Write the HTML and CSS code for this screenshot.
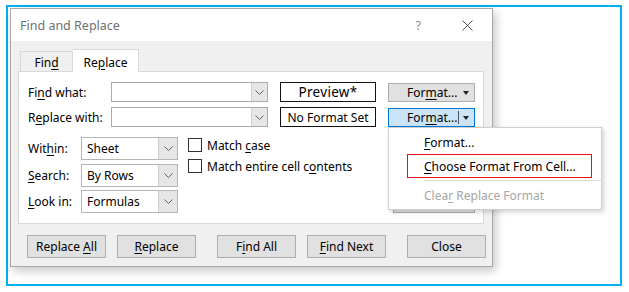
FILE: index.html
```html
<!DOCTYPE html>
<html>
<head>
<meta charset="utf-8">
<link rel="stylesheet" href="styles.css">
</head>
<body>
<div class="frame">
  <div class="dialog">
    <div class="titlebar">
      <span class="title">Find and Replace</span>
      <span class="help">?</span>
      <svg class="closex" width="11" height="11" viewBox="0 0 11 11"><path d="M0.5 0.5 L10.5 10.5 M10.5 0.5 L0.5 10.5" stroke="#555" stroke-width="1" fill="none"/></svg>
    </div>
    <div class="body">
      <div class="tabs">
        <div class="tab"><span>Fin<u>d</u></span></div>
        <div class="tab active"><span>Re<u>p</u>lace</span></div>
      </div>
      <div class="panel">
        <div class="row">
          <span class="label">Fi<u>n</u>d what:</span>
          <div class="combo"><span class="combo-btn"><svg width="9" height="5" viewBox="0 0 9 5"><path d="M0.5 0.5 L4.5 4.5 L8.5 0.5" stroke="#606060" fill="none"/></svg></span></div>
          <div class="preview preview-big"><span>Preview*</span></div>
          <div class="fmt"><span class="fmt-text">For<u>m</u>at...</span><span class="fmt-arrow"></span></div>
        </div>
        <div class="row">
          <span class="label">R<u>e</u>place with:</span>
          <div class="combo"><span class="combo-btn"><svg width="9" height="5" viewBox="0 0 9 5"><path d="M0.5 0.5 L4.5 4.5 L8.5 0.5" stroke="#606060" fill="none"/></svg></span></div>
          <div class="preview"><span>No Format Set</span></div>
          <div class="fmt fmt-active"><span class="fmt-text">For<u>m</u>at...</span><span class="fmt-sep"></span><span class="fmt-arrow"></span></div>
        </div>
        <div class="lower">
          <div class="selects">
            <div class="srow"><span class="slabel">Wit<u>h</u>in:</span><div class="sel"><span class="sel-text">Sheet</span><span class="sel-btn"><svg width="9" height="5" viewBox="0 0 9 5"><path d="M0.5 0.5 L4.5 4.5 L8.5 0.5" stroke="#606060" fill="none"/></svg></span></div></div>
            <div class="srow"><span class="slabel"><u>S</u>earch:</span><div class="sel"><span class="sel-text">By Rows</span><span class="sel-btn"><svg width="9" height="5" viewBox="0 0 9 5"><path d="M0.5 0.5 L4.5 4.5 L8.5 0.5" stroke="#606060" fill="none"/></svg></span></div></div>
            <div class="srow"><span class="slabel"><u>L</u>ook in:</span><div class="sel"><span class="sel-text">Formulas</span><span class="sel-btn"><svg width="9" height="5" viewBox="0 0 9 5"><path d="M0.5 0.5 L4.5 4.5 L8.5 0.5" stroke="#606060" fill="none"/></svg></span></div></div>
          </div>
          <div class="checks">
            <div class="check"><span class="box"></span><span>Match <u>c</u>ase</span></div>
            <div class="check"><span class="box"></span><span>Match entire cell c<u>o</u>ntents</span></div>
          </div>
          <div class="optcol"><div class="btn options" aria-label="Options"></div></div>
        </div>
      </div>
      <div class="actions">
        <div class="btn act"><span>Replace <u>A</u>ll</span></div>
        <div class="btn act"><span><u>R</u>eplace</span></div>
        <div class="btn act wide-gap"><span>F<u>i</u>nd All</span></div>
        <div class="btn act"><span><u>F</u>ind Next</span></div>
        <div class="btn act wide-gap"><span>Close</span></div>
      </div>
    </div>
  </div>
  <div class="menu">
    <div class="mi"><span><u>F</u>ormat...</span></div>
    <div class="mi mi-choose"><span class="hl"></span><span><u>C</u>hoose Format From Cell...</span></div>
    <div class="msep"></div>
    <div class="mi mi-dis"><span>Clea<u>r</u> Replace Format</span></div>
  </div>
</div>
</body>
</html>
```

FILE: styles.css
```css
* { box-sizing: border-box; }
html, body { margin: 0; padding: 0; background: #fff; }
body {
  font-family: "Noto Sans", "Open Sans", sans-serif;
  font-size: 12px;
  color: #000;
}
u { text-decoration: underline; text-underline-offset: 2px; }

.frame {
  position: relative;
  margin: 5px 0 0 6px;
  width: 616px;
  height: 281px;
  border: 2px solid #00b0f0;
  padding: 1px 0 0 2px;
}

.dialog {
  width: 483px;
  height: 259px;
  border: 1px solid #a8a8a8;
  background: #f0f0f0;
  box-shadow: 3px 4px 9px rgba(0,0,0,0.22);
  display: flex;
  flex-direction: column;
}

.titlebar {
  height: 32px;
  background: #fff;
  display: flex;
  align-items: center;
  padding: 0 19px 0 9px;
  flex: none;
}
.title { flex: 1; color: #6f6f6f; font-size: 12.5px; }
.help { color: #8a8a8a; font-size: 12px; margin-right: 41px; }
.closex { display: block; }

.body {
  flex: 1;
  padding: 8px 0 0 7px;
  display: flex;
  flex-direction: column;
}

.tabs {
  display: flex;
  align-items: flex-end;
  height: 22px;
  padding-left: 2px;
  position: relative;
  z-index: 1;
}
.tab {
  height: 20px;
  width: 53px;
  border: 1px solid #d9d9d9;
  border-bottom: none;
  background: #f0f0f0;
  display: flex;
  align-items: center;
  justify-content: center;
  padding-top: 2px;
}
.tab.active {
  height: 23px;
  width: 66px;
  background: #fff;
  margin-bottom: -1px;
  border-left: none;
}

.panel {
  width: 466px;
  height: 153px;
  background: #fff;
  border: 1px solid #d9d9d9;
  padding: 10px 8px 0 9px;
}

.row {
  display: flex;
  align-items: center;
  height: 20px;
  margin-bottom: 5px;
}
.label { width: 83px; flex: none; }
.combo {
  width: 157px;
  height: 20px;
  border: 1px solid #ababab;
  display: flex;
  justify-content: flex-end;
  background: #fff;
}
.combo-btn {
  width: 16px;
  background: #e6e6e6;
  border-left: 1px solid #d0d0d0;
  display: flex;
  align-items: center;
  justify-content: center;
}
.combo-btn svg, .sel-btn svg { display: block; }

.preview {
  width: 96px;
  height: 20px;
  margin-left: 12px;
  border: 1px solid #111;
  display: flex;
  align-items: center;
  justify-content: center;
  font-size: 12px;
}
.preview-big { font-size: 13.5px; letter-spacing: 0.3px; }

.fmt {
  width: 87px;
  height: 19px;
  margin-left: 12px;
  background: #e1e1e1;
  border: 1px solid #adadad;
  display: flex;
  align-items: center;
  padding-left: 18px;
}
.fmt-text { flex: 1; }
.fmt-arrow {
  width: 0; height: 0;
  border-left: 3px solid transparent;
  border-right: 3px solid transparent;
  border-top: 4px solid #222;
  margin: 1px 5px 0 5px;
}
.fmt-sep { width: 1px; height: 13px; background: #555; }
.fmt-active {
  background: #cce4f7;
  border-color: #0078d7;
}
.fmt-active .fmt-arrow { margin-left: 4px; }

.lower {
  display: flex;
  align-items: flex-start;
  margin-top: 10px;
  height: 76px;
}
.selects { display: flex; flex-direction: column; gap: 3.5px; }
.srow { display: flex; align-items: center; }
.slabel { width: 53px; }
.sel {
  width: 97px;
  height: 23px;
  border: 1px solid #b4b4b4;
  display: flex;
  background: #fff;
}
.sel-text { flex: 1; padding-left: 5px; display: flex; align-items: center; }
.sel-btn {
  width: 19px;
  background: #e6e6e6;
  border-left: 1px solid #cfcfcf;
  display: flex;
  align-items: center;
  justify-content: center;
}

.checks {
  flex: 1;
  display: flex;
  flex-direction: column;
  gap: 5px;
  padding: 0 0 0 10px;
}
.check { display: flex; align-items: center; height: 16px; }
.box {
  width: 14px; height: 14px;
  border: 1px solid #333;
  background: #fff;
  margin-right: 5px;
  flex: none;
}

.optcol { align-self: flex-end; margin-bottom: 0px; }
.btn {
  background: #e1e1e1;
  border: 1px solid #adadad;
  height: 23px;
  display: flex;
  align-items: center;
  justify-content: center;
}
.options { width: 82px; }

.actions {
  display: flex;
  margin-top: 11px;
  padding-left: 9px;
  gap: 11px;
}
.act { width: 79px; }
.act.wide-gap { margin-left: 10px; }

.menu {
  position: absolute;
  left: 380px;
  top: 120px;
  width: 214px;
  height: 83px;
  background: #fff;
  border: 1px solid #cfcfcf;
  box-shadow: 2px 2px 5px rgba(0,0,0,0.18);
  padding-top: 3px;
  z-index: 5;
}
.mi {
  position: relative;
  height: 22px;
  padding-left: 35px;
  display: flex;
  align-items: center;
  color: #000;
}
.mi-choose { height: 24px; margin-top: 1px; }
.hl {
  position: absolute;
  left: 18px;
  top: 0;
  width: 185px;
  height: 24px;
  border: 1px solid #e81010;
}
.msep {
  height: 1px;
  margin: 2px 0 3px 35px;
  background: #dcdcdc;
}
.mi-dis { color: #a5a5a5; }
```
